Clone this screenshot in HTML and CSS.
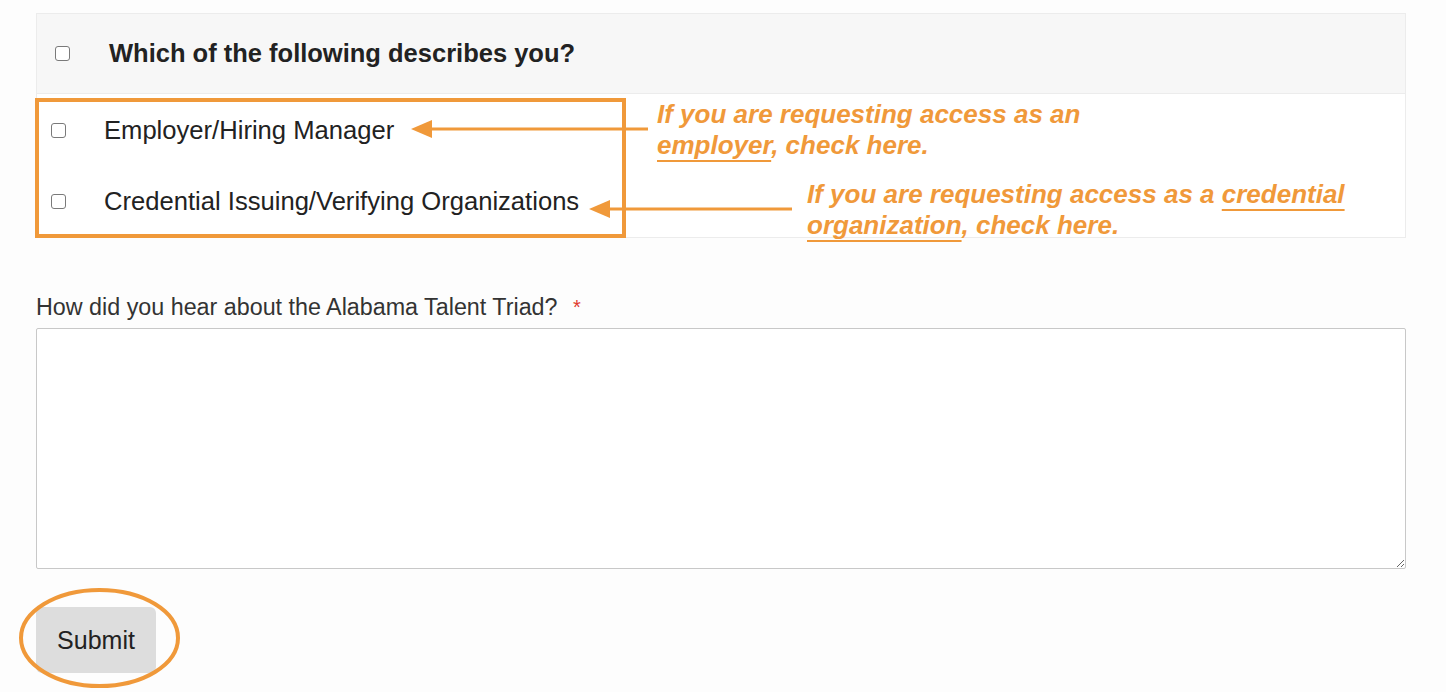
FILE: index.html
```
<!DOCTYPE html>
<html>
<head>
<meta charset="utf-8">
<link rel="stylesheet" href="styles.css">
</head>
<body>
<div class="page">
  <div class="options">
    <div class="options-head">
      <input type="checkbox" class="cb cb-head">
      <span class="head-text">Which of the following describes you?</span>
    </div>
    <div class="options-body">
      <label class="option"><input type="checkbox" class="cb"><span>Employer/Hiring Manager</span></label>
      <label class="option"><input type="checkbox" class="cb"><span>Credential Issuing/Verifying Organizations</span></label>
    </div>
  </div>

  <div class="field">
    <div class="field-label">How did you hear about the Alabama Talent Triad? <span class="req">*</span></div>
    <textarea class="field-input"></textarea>
  </div>

  <button class="submit" type="button">Submit</button>

  <svg class="marks" width="1446" height="692" viewBox="0 0 1446 692">
    <rect x="37" y="100" width="587" height="136" fill="none" stroke="#f0993a" stroke-width="4"/>
    <line x1="428" y1="129" x2="648" y2="129" stroke="#f0993a" stroke-width="3"/>
    <polygon points="411,129 432,120 432,138" fill="#f0993a"/>
    <line x1="606" y1="209" x2="792" y2="209" stroke="#f0993a" stroke-width="3"/>
    <polygon points="589,209 610,200 610,218" fill="#f0993a"/>
    <ellipse cx="99.5" cy="638" rx="78.5" ry="48" fill="none" stroke="#f0993a" stroke-width="4"/>
  </svg>

  <div class="note note-1">If you are requesting access as an<br><u>employer</u>, check here.</div>
  <div class="note note-2">If you are requesting access as a <u>credential</u><br><u>organization</u>, check here.</div>
</div>
</body>
</html>
```
FILE: styles.css
```
html, body {
  margin: 0;
  padding: 0;
  background: #fdfdfd;
}
body {
  font-family: "Liberation Sans", Arial, Helvetica, sans-serif;
  color: #222;
}
.page {
  position: relative;
  width: 1446px;
  height: 692px;
  padding: 13px 0 0 36px;
  box-sizing: border-box;
  overflow: hidden;
}
.options {
  width: 1370px;
  border: 1px solid #ececec;
  box-sizing: border-box;
  background: #fff;
}
.options-head {
  height: 80px;
  background: #f7f7f7;
  border-bottom: 1px solid #ececec;
  display: flex;
  align-items: center;
  padding-left: 18px;
  box-sizing: border-box;
}
.cb {
  -webkit-appearance: none;
  appearance: none;
  margin: 0;
  width: 15px;
  height: 15px;
  box-sizing: border-box;
  border: 1.5px solid #7a7a7a;
  border-radius: 3px;
  background: #fff;
  flex: none;
}
.cb-head {
  width: 15px;
  height: 15px;
}
.head-text {
  margin-left: 39px;
  font-weight: bold;
  font-size: 25.5px;
  color: #222;
}
.options-body {
  height: 143px;
  padding-top: 1px;
  box-sizing: border-box;
}
.option {
  height: 71px;
  display: flex;
  align-items: center;
  padding-left: 14px;
  font-size: 25.6px;
  color: #222;
}
.option span {
  margin-left: 38px;
}
.field {
  margin-top: 56px;
}
.field-label {
  font-size: 23.3px;
  line-height: 27px;
  color: #333;
  margin-bottom: 7px;
}
.req {
  color: #e03a2f;
  font-size: 20px;
  margin-left: 9px;
  vertical-align: top;
}
.field-input {
  display: block;
  width: 1370px;
  height: 241px;
  box-sizing: border-box;
  border: 1px solid #c8c8c8;
  border-radius: 2px;
  background: #fff;
  margin: 0;
}
.submit {
  display: block;
  margin-top: 38px;
  width: 120px;
  height: 66px;
  border: none;
  border-radius: 6px;
  background: #dddddd;
  font-family: "Liberation Sans", Arial, Helvetica, sans-serif;
  font-size: 25px;
  color: #222;
  padding: 0;
}
.marks {
  position: absolute;
  top: 0;
  left: 0;
  pointer-events: none;
}
.note {
  position: absolute;
  font-family: "Liberation Sans", Arial, Helvetica, sans-serif;
  font-weight: bold;
  font-style: italic;
  font-size: 26px;
  line-height: 31px;
  color: #f0993a;
  white-space: nowrap;
}
.note u {
  text-decoration-thickness: 2px;
  text-underline-offset: 6px;
}
.note-1 {
  left: 657px;
  top: 99px;
}
.note-2 {
  left: 807px;
  top: 179px;
}
```
